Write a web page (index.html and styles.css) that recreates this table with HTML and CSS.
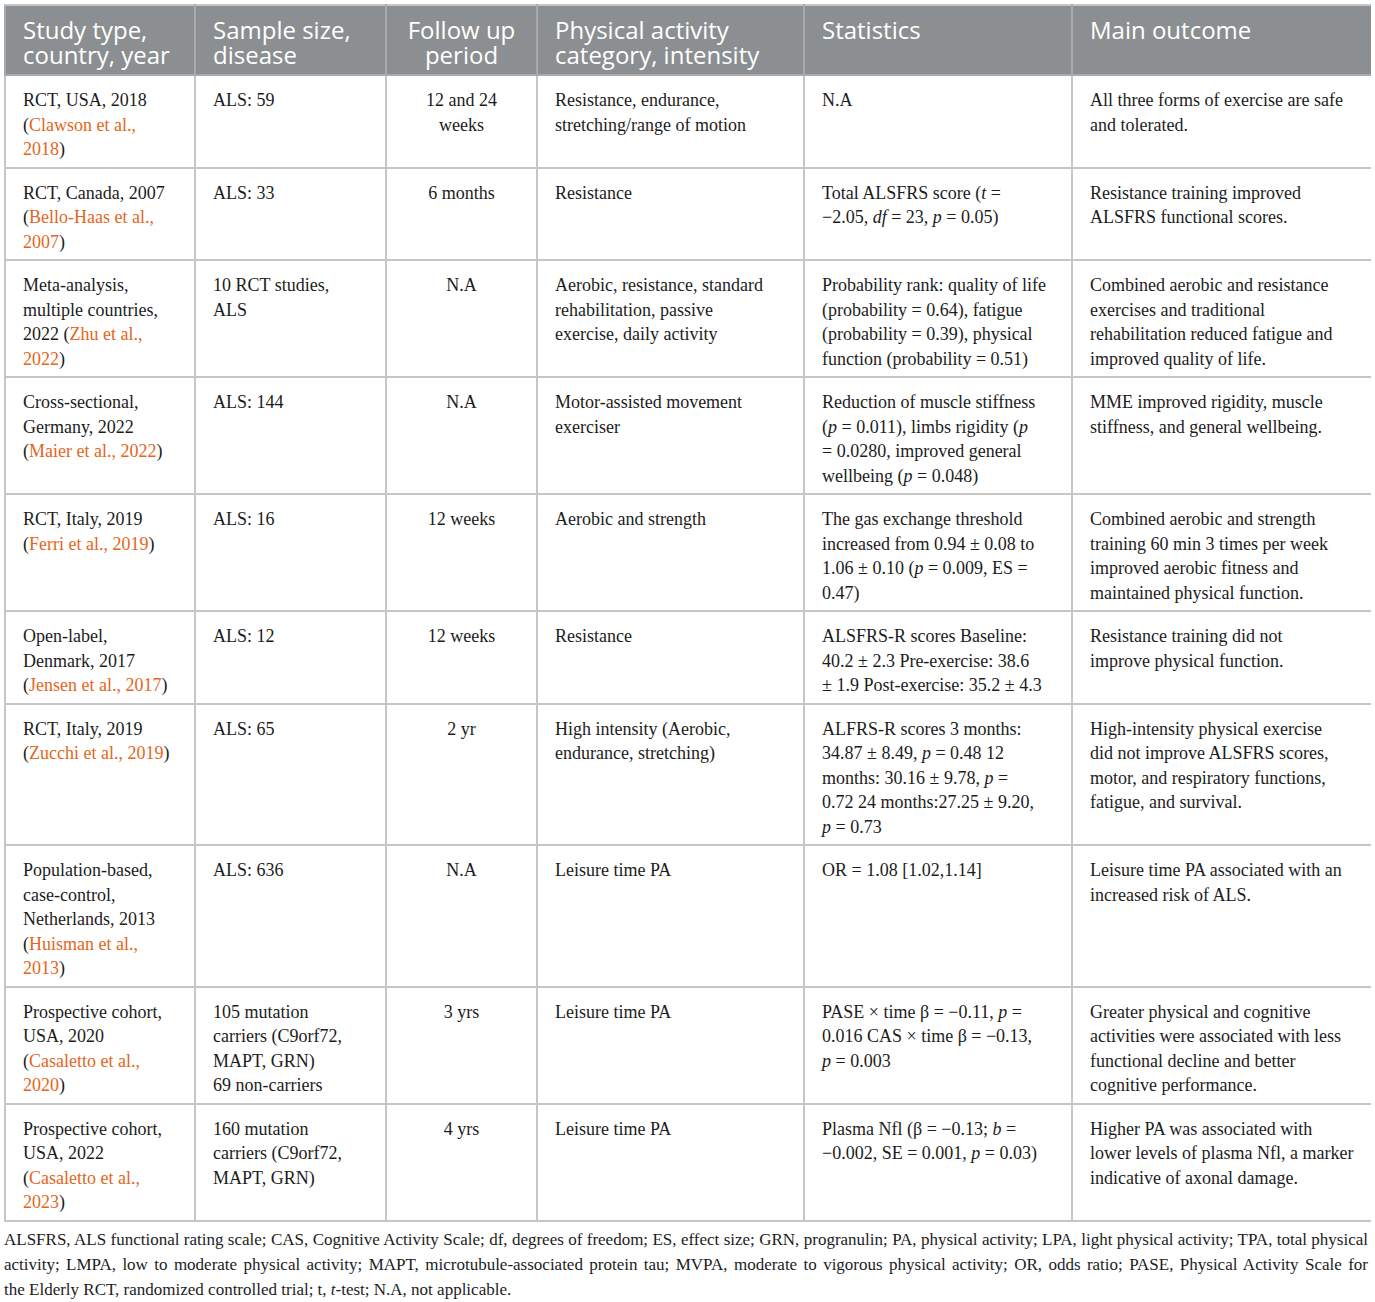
FILE: index.html
```html
<!DOCTYPE html>
<html lang="en">
<head>
    <meta charset="UTF-8">
    <title>Physical activity and ALS studies</title>
    <link rel="stylesheet" href="styles.css">
</head>
<body>
    <table class="study-table">
        <colgroup>
            <col class="c1">
            <col class="c2">
            <col class="c3">
            <col class="c4">
            <col class="c5">
            <col class="c6">
        </colgroup>
        <thead>
            <tr>
                <th>Study type,<br>country, year</th>
                <th>Sample size,<br>disease</th>
                <th class="center">Follow up<br>period</th>
                <th>Physical activity<br>category, intensity</th>
                <th>Statistics</th>
                <th>Main outcome</th>
            </tr>
        </thead>
        <tbody>
            <tr>
                <td>RCT, USA, 2018<br>(<a href="#">Clawson et al.,<br>2018</a>)</td>
                <td>ALS: 59</td>
                <td class="center">12 and 24<br>weeks</td>
                <td>Resistance, endurance,<br>stretching/range of motion</td>
                <td>N.A</td>
                <td>All three forms of exercise are safe<br>and tolerated.</td>
            </tr>
            <tr>
                <td>RCT, Canada, 2007<br>(<a href="#">Bello-Haas et al.,<br>2007</a>)</td>
                <td>ALS: 33</td>
                <td class="center">6 months</td>
                <td>Resistance</td>
                <td>Total ALSFRS score (<i>t</i> =<br>−2.05, <i>df</i> = 23, <i>p</i> = 0.05)</td>
                <td>Resistance training improved<br>ALSFRS functional scores.</td>
            </tr>
            <tr>
                <td>Meta-analysis,<br>multiple countries,<br>2022 (<a href="#">Zhu et al.,<br>2022</a>)</td>
                <td>10 RCT studies,<br>ALS</td>
                <td class="center">N.A</td>
                <td>Aerobic, resistance, standard<br>rehabilitation, passive<br>exercise, daily activity</td>
                <td>Probability rank: quality of life<br>(probability = 0.64), fatigue<br>(probability = 0.39), physical<br>function (probability = 0.51)</td>
                <td>Combined aerobic and resistance<br>exercises and traditional<br>rehabilitation reduced fatigue and<br>improved quality of life.</td>
            </tr>
            <tr>
                <td>Cross-sectional,<br>Germany, 2022<br>(<a href="#">Maier et al., 2022</a>)</td>
                <td>ALS: 144</td>
                <td class="center">N.A</td>
                <td>Motor-assisted movement<br>exerciser</td>
                <td>Reduction of muscle stiffness<br>(<i>p</i> = 0.011), limbs rigidity (<i>p</i><br>= 0.0280, improved general<br>wellbeing (<i>p</i> = 0.048)</td>
                <td>MME improved rigidity, muscle<br>stiffness, and general wellbeing.</td>
            </tr>
            <tr>
                <td>RCT, Italy, 2019<br>(<a href="#">Ferri et al., 2019</a>)</td>
                <td>ALS: 16</td>
                <td class="center">12 weeks</td>
                <td>Aerobic and strength</td>
                <td>The gas exchange threshold<br>increased from 0.94 ± 0.08 to<br>1.06 ± 0.10 (<i>p</i> = 0.009, ES =<br>0.47)</td>
                <td>Combined aerobic and strength<br>training 60 min 3 times per week<br>improved aerobic fitness and<br>maintained physical function.</td>
            </tr>
            <tr>
                <td>Open-label,<br>Denmark, 2017<br>(<a href="#">Jensen et al., 2017</a>)</td>
                <td>ALS: 12</td>
                <td class="center">12 weeks</td>
                <td>Resistance</td>
                <td>ALSFRS-R scores Baseline:<br>40.2 ± 2.3 Pre-exercise: 38.6<br>± 1.9 Post-exercise: 35.2 ± 4.3</td>
                <td>Resistance training did not<br>improve physical function.</td>
            </tr>
            <tr>
                <td>RCT, Italy, 2019<br>(<a href="#">Zucchi et al., 2019</a>)</td>
                <td>ALS: 65</td>
                <td class="center">2 yr</td>
                <td>High intensity (Aerobic,<br>endurance, stretching)</td>
                <td>ALFRS-R scores 3 months:<br>34.87 ± 8.49, <i>p</i> = 0.48 12<br>months: 30.16 ± 9.78, <i>p</i> =<br>0.72 24 months:27.25 ± 9.20,<br><i>p</i> = 0.73</td>
                <td>High-intensity physical exercise<br>did not improve ALSFRS scores,<br>motor, and respiratory functions,<br>fatigue, and survival.</td>
            </tr>
            <tr>
                <td>Population-based,<br>case-control,<br>Netherlands, 2013<br>(<a href="#">Huisman et al.,<br>2013</a>)</td>
                <td>ALS: 636</td>
                <td class="center">N.A</td>
                <td>Leisure time PA</td>
                <td>OR = 1.08 [1.02,1.14]</td>
                <td>Leisure time PA associated with an<br>increased risk of ALS.</td>
            </tr>
            <tr>
                <td>Prospective cohort,<br>USA, 2020<br>(<a href="#">Casaletto et al.,<br>2020</a>)</td>
                <td>105 mutation<br>carriers (C9orf72,<br>MAPT, GRN)<br>69 non-carriers</td>
                <td class="center">3 yrs</td>
                <td>Leisure time PA</td>
                <td>PASE × time β = −0.11, <i>p</i> =<br>0.016 CAS × time β = −0.13,<br><i>p</i> = 0.003</td>
                <td>Greater physical and cognitive<br>activities were associated with less<br>functional decline and better<br>cognitive performance.</td>
            </tr>
            <tr>
                <td>Prospective cohort,<br>USA, 2022<br>(<a href="#">Casaletto et al.,<br>2023</a>)</td>
                <td>160 mutation<br>carriers (C9orf72,<br>MAPT, GRN)</td>
                <td class="center">4 yrs</td>
                <td>Leisure time PA</td>
                <td>Plasma Nfl (β = −0.13; <i>b</i> =<br>−0.002, SE = 0.001, <i>p</i> = 0.03)</td>
                <td>Higher PA was associated with<br>lower levels of plasma Nfl, a marker<br>indicative of axonal damage.</td>
            </tr>
        </tbody>
    </table>

    <p class="footnote">
        <span class="line">ALSFRS, ALS functional rating scale; CAS, Cognitive Activity Scale; df, degrees of freedom; ES, effect size; GRN, progranulin; PA, physical activity; LPA, light physical activity; TPA, total physical</span>
        <span class="line">activity; LMPA, low to moderate physical activity; MAPT, microtubule-associated protein tau; MVPA, moderate to vigorous physical activity; OR, odds ratio; PASE, Physical Activity Scale for</span>
        <span class="line last">the Elderly RCT, randomized controlled trial; t, <i>t</i>-test; N.A, not applicable.</span>
    </p>
</body>
</html>
```

FILE: styles.css
```css
* {
    box-sizing: border-box;
}

body {
    margin: 4px;
    font-family: 'Liberation Serif', 'Times New Roman', serif;
    color: #1c1c1c;
    background: white;
}

.study-table {
    width: 1367px;
    border-collapse: collapse;
    table-layout: fixed;
    border: 2px solid #c6c6c6;
}

.c1 { width: 190px; }
.c2 { width: 191px; }
.c3 { width: 151px; }
.c4 { width: 267px; }
.c5 { width: 268px; }
.c6 { width: 300px; }

.study-table th {
    background: #8b8f91;
    color: white;
    font-family: 'Open Sans', 'Liberation Sans', sans-serif;
    font-weight: 400;
    font-size: 24px;
    line-height: 25px;
    text-align: left;
    vertical-align: top;
    padding: 11px 17px 7px;
    border: 2px solid #a7abad;
    border-top-color: #c6c6c6;
}

.study-table td {
    font-size: 18px;
    line-height: 24.5px;
    vertical-align: top;
    white-space: nowrap;
    padding: 12px 6px 5px 17px;
    border: 2px solid #c6c6c6;
}

.study-table .center {
    text-align: center;
    padding-right: 17px;
}

.study-table a {
    color: #e5661b;
    text-decoration: none;
}

.footnote {
    margin: 5px 0 0;
    width: 1364px;
    font-size: 17px;
    line-height: 25px;
}

.footnote .line {
    display: block;
    white-space: nowrap;
    text-align: justify;
    text-align-last: justify;
}

.footnote .last {
    text-align-last: left;
}
```
